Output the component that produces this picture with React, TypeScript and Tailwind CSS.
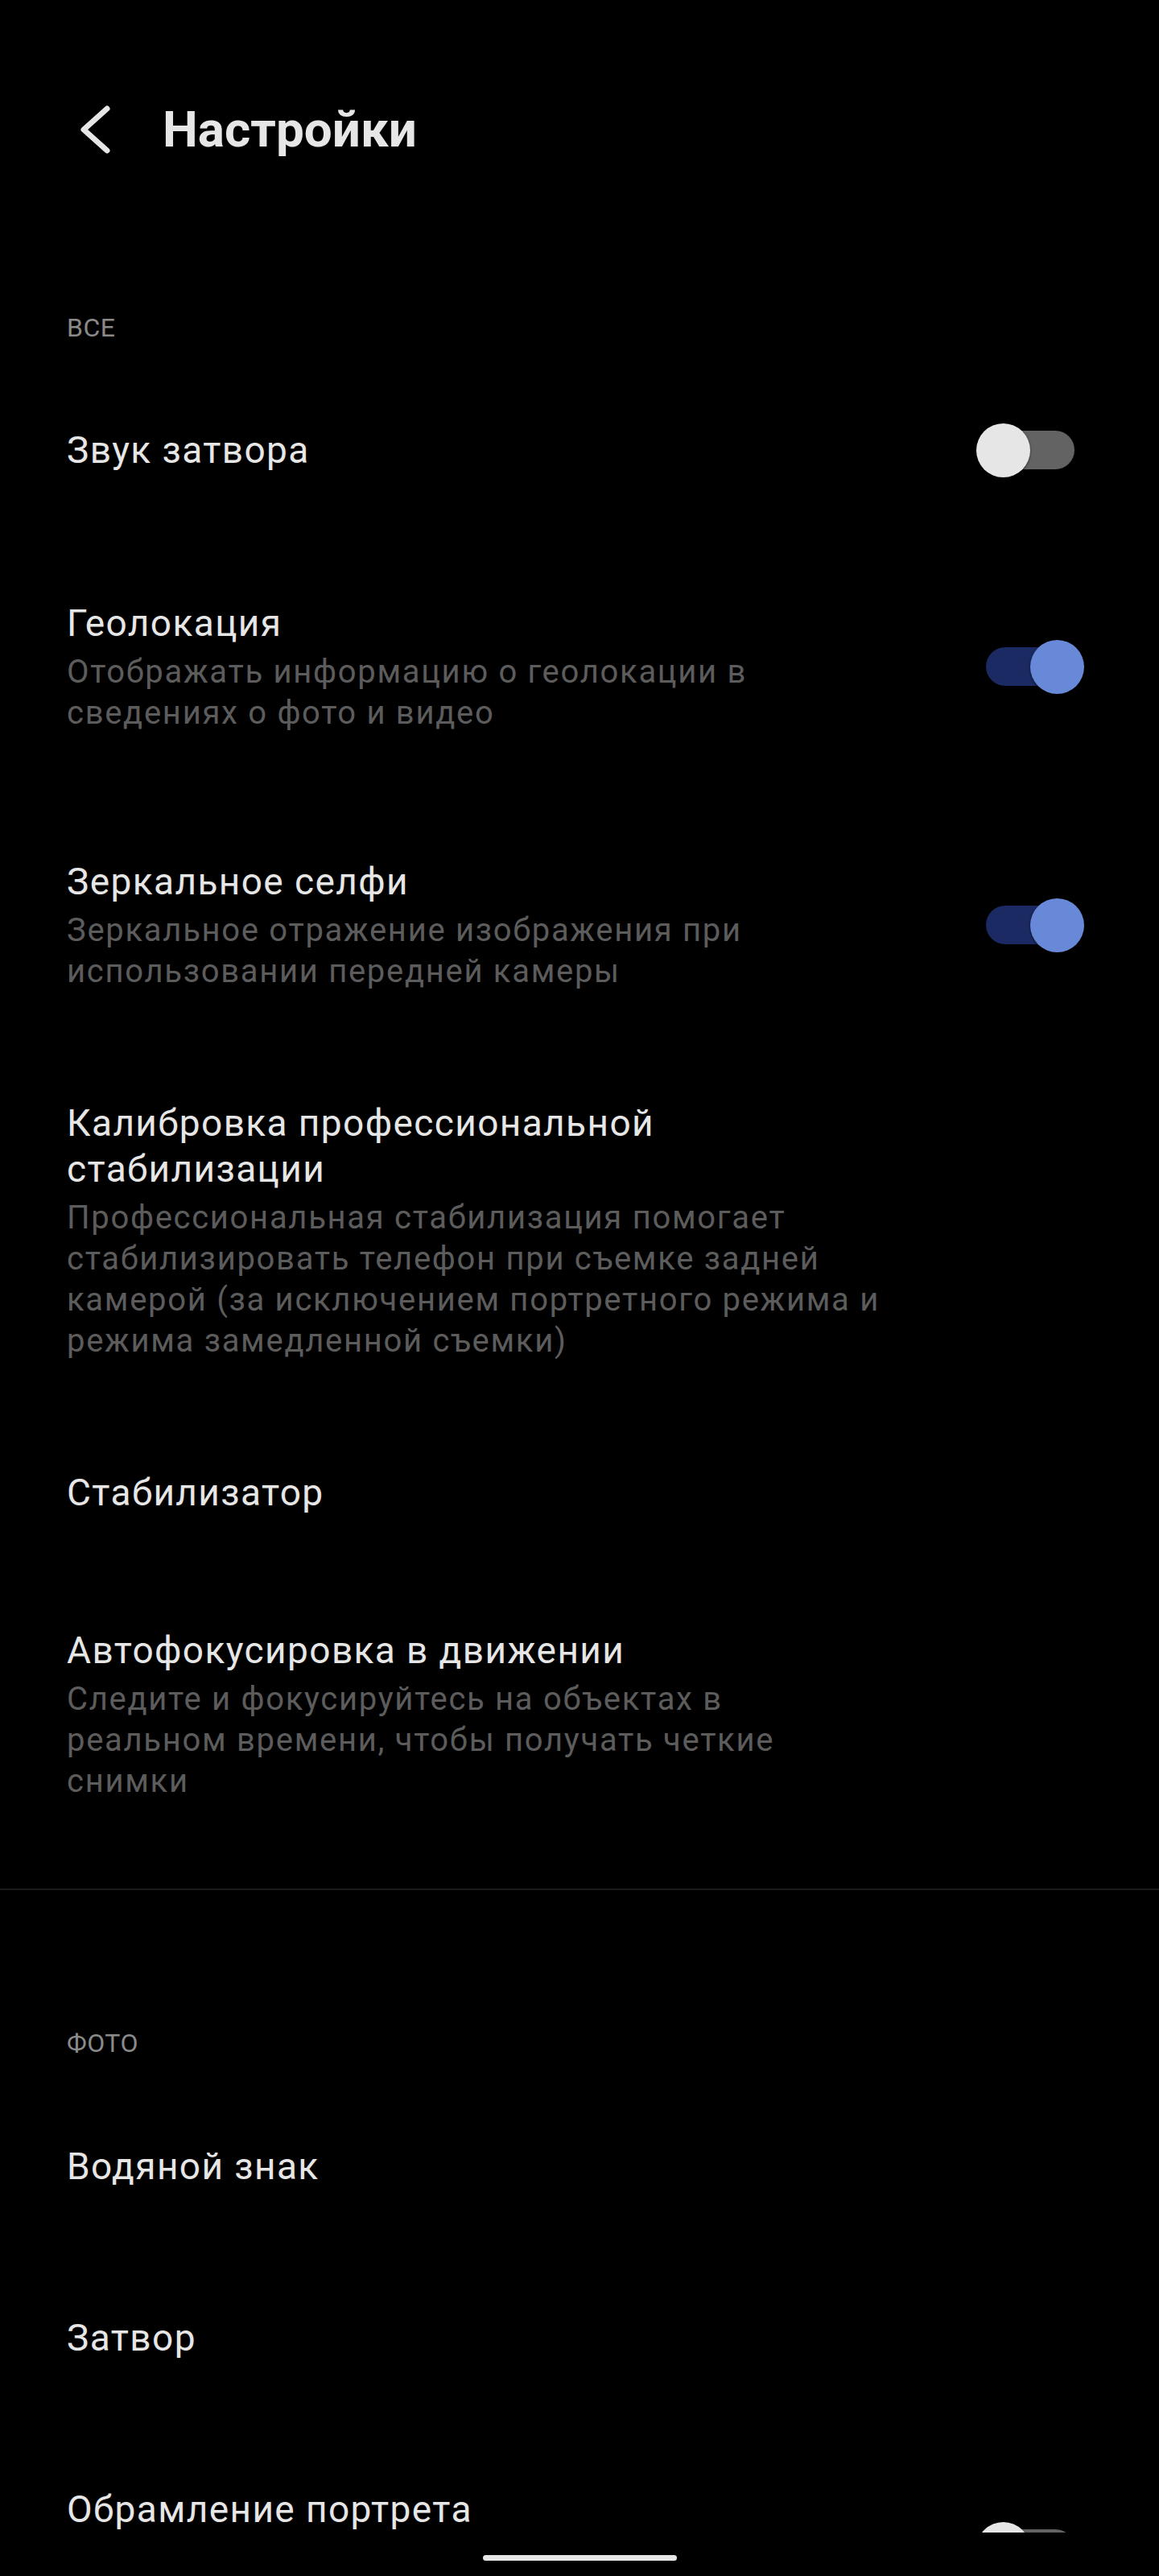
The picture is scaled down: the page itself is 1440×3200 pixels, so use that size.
import React from "react";

type RowProps = {
  title: string;
  sub?: string;
  toggle?: "on" | "off";
  pad?: "lg" | "md" | "first" | "mdTop";
  toggleTop?: boolean;
};

const Toggle = ({ on, className = "" }: { on: boolean; className?: string }) => (
  <div className={`relative h-[67px] w-[134px] shrink-0 ${className}`}>
    <div
      className={`absolute left-[12px] top-[9px] h-[48px] w-[110px] rounded-full ${
        on ? "bg-[#1b2a62]" : "bg-[#636363]"
      }`}
    />
    <div
      className={`absolute top-0 h-[67px] w-[67px] rounded-full shadow-[0_1px_3px_rgba(0,0,0,0.6)] ${
        on ? "right-0 bg-[#6889d8]" : "left-0 bg-[#e6e6e6]"
      }`}
    />
  </div>
);

const padding = {
  lg: "py-[78px]",
  md: "py-[57px]",
  mdTop: "pt-[61px] pb-[57px]",
  first: "pt-[78px] pb-[75px]",
};

const Row = ({ title, sub, toggle, pad = "lg", toggleTop }: RowProps) => (
  <div className={`flex pl-[83px] pr-[93px] ${toggleTop ? "items-start" : "items-center"} ${padding[pad]}`}>
    <div className="w-[1015px]">
      <div className="text-[46px] leading-[57px] tracking-[1.4px] text-[#e6e6e6]">{title}</div>
      {sub && (
        <div className="mt-[6px] text-[40px] leading-[51px] tracking-[1.7px] text-[#5c5c5c]">{sub}</div>
      )}
    </div>
    {toggle && <Toggle on={toggle === "on"} className={`ml-auto ${toggleTop ? "mt-[44px]" : ""}`} />}
  </div>
);

const SectionLabel = ({ children, className = "" }: { children: React.ReactNode; className?: string }) => (
  <div className={`pl-[83px] text-[32px] leading-[40px] tracking-[0.5px] text-[#8a8a8a] ${className}`}>
    {children}
  </div>
);

export default function App() {
  return (
    <div className="flex h-[3200px] w-[1440px] flex-col bg-black font-['Roboto',_'Noto_Sans',_sans-serif]">
      <div className="h-[3146px] overflow-hidden">
        {/* header */}
        <div className="mt-[125px] flex h-[72px] items-center">
          <svg className="ml-[96px] h-[64px] w-[44px]" viewBox="0 0 44 64" fill="none">
            <polyline
              points="37,6 8,32 37,58"
              stroke="#e6e6e6"
              strokeWidth="7"
              strokeLinecap="round"
              strokeLinejoin="round"
            />
          </svg>
          <h1 className="ml-[62px] text-[62px] font-bold leading-[72px] text-[#e6e6e6]">Настройки</h1>
        </div>

        <SectionLabel className="mt-[190px]">ВСЕ</SectionLabel>
        <div className="mt-[21px]">
          <Row title="Звук затвора" toggle="off" pad="first" />
          <Row
            title="Геолокация"
            sub="Отображать информацию о геолокации в сведениях о фото и видео"
            toggle="on"
          />
          <Row
            title="Зеркальное селфи"
            sub="Зеркальное отражение изображения при использовании передней камеры"
            toggle="on"
          />
          <Row
            title="Калибровка профессиональной стабилизации"
            sub="Профессиональная стабилизация помогает стабилизировать телефон при съемке задней камерой (за исключением портретного режима и режима замедленной съемки)"
            pad="md"
          />
          <Row title="Стабилизатор" />
          <Row
            title="Автофокусировка в движении"
            sub="Следите и фокусируйтесь на объектах в реальном времени, чтобы получать четкие снимки"
            pad="mdTop"
          />
        </div>

        <div className="mt-[51px] h-[2px] bg-[#1a1a1a]" />

        <SectionLabel className="mt-[170px]">ФОТО</SectionLabel>
        <div className="mt-[27px]">
          <Row title="Водяной знак" />
          <Row title="Затвор" />
          <Row title="Обрамление портрета" toggle="off" toggleTop />
        </div>
      </div>

      {/* gesture bar */}
      <div className="flex flex-1 justify-center">
        <div className="mt-[28px] h-[7px] w-[241px] rounded-full bg-[#e6e6e6]" />
      </div>
    </div>
  );
}
